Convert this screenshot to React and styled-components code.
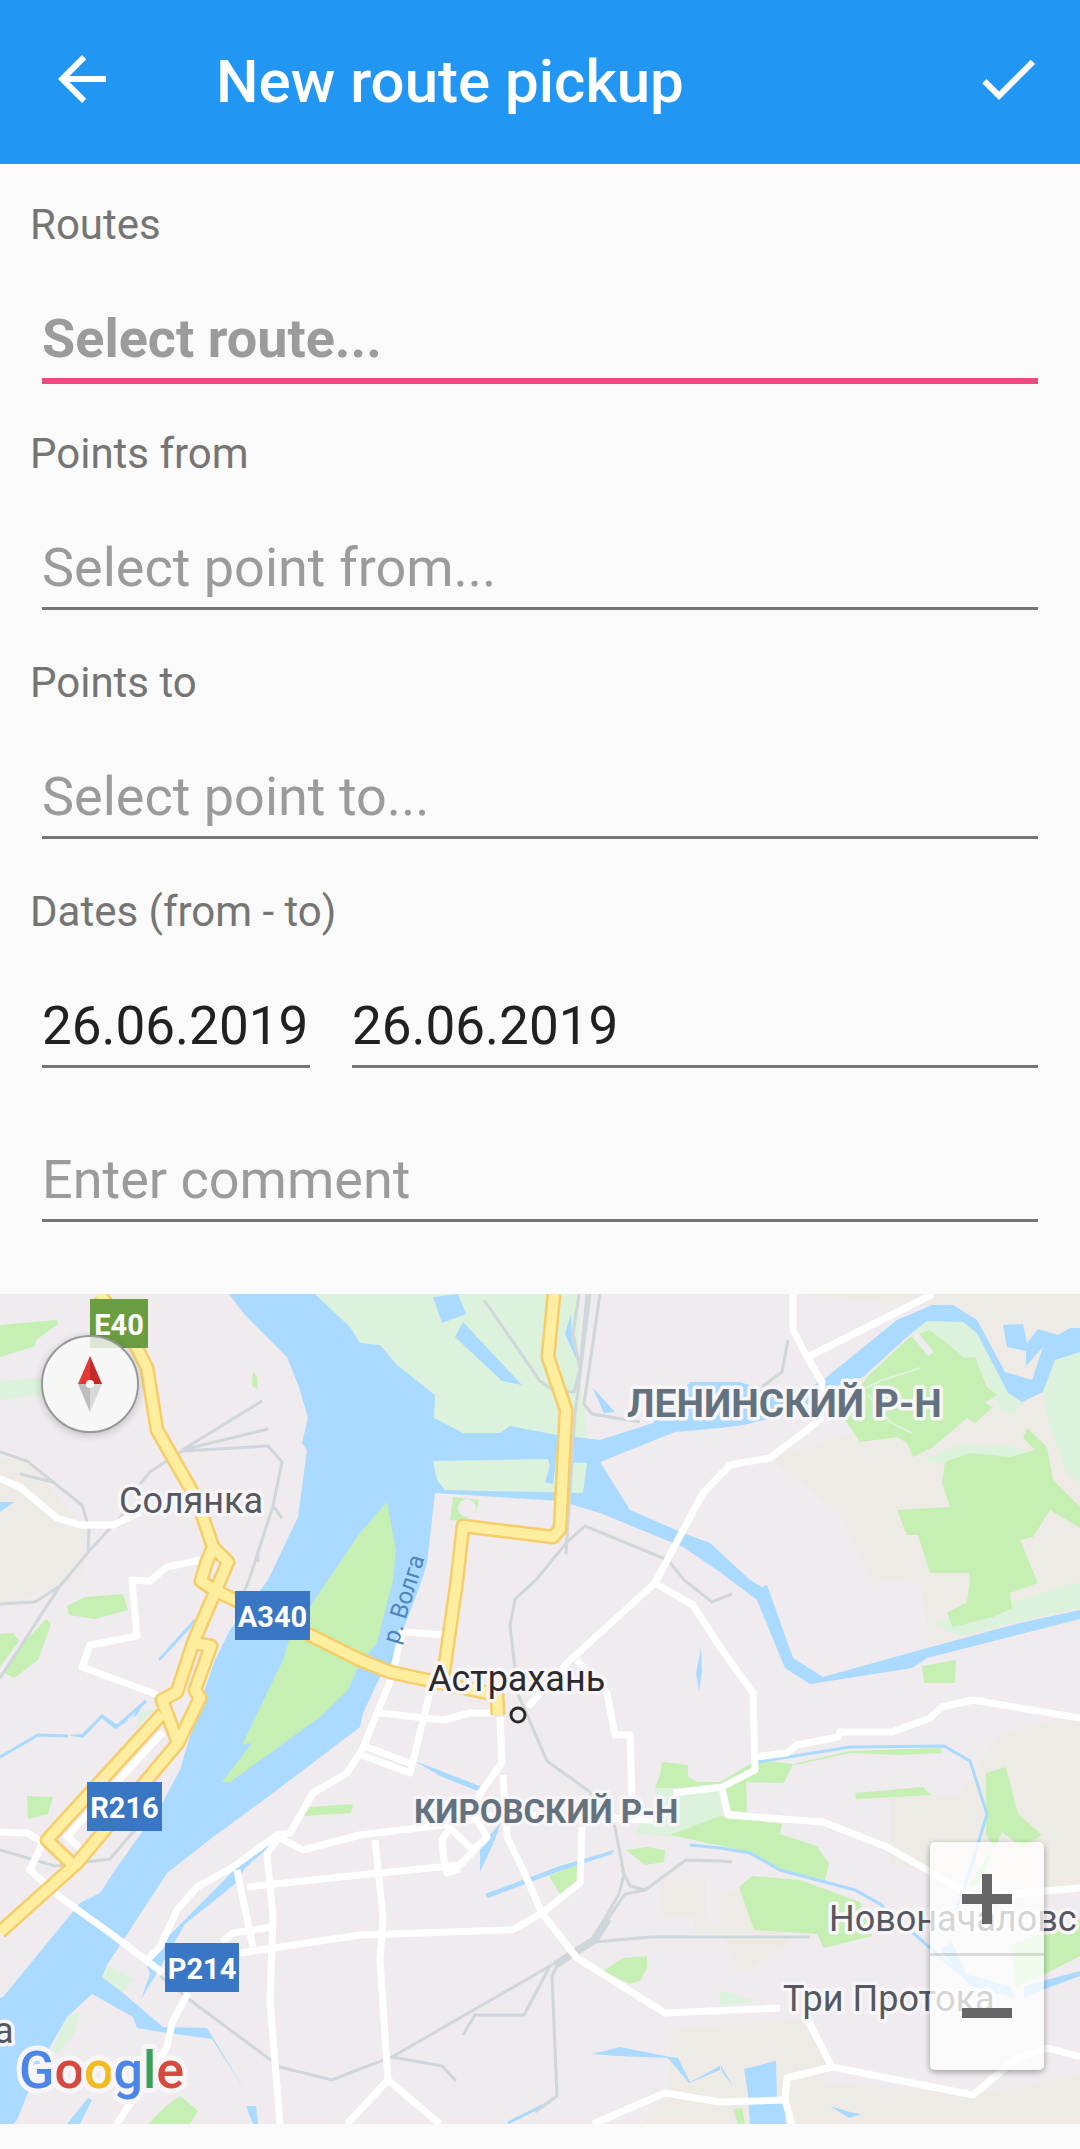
import { useState } from 'react';
import styled, { createGlobalStyle } from 'styled-components';
import { MdArrowBack, MdCheck } from 'react-icons/md';

const GlobalStyle = createGlobalStyle`
  *{
    box-sizing: border-box;
  }
  body{
    margin: 0;
    background: #fafafa;
    font-family: Roboto, sans-serif;
  }
`;

const Toolbar = styled.header`
  display: flex;
  align-items: flex-end;
  gap: 98px;
  padding: 43px 36px 49px 46px;
  color: #fff;
  background: #2196f3;
  h1{
    flex: 1;
    margin: 0;
    font-size: 60px;
    line-height: 66px;
    font-weight: 500;
  }
`;

const IconButton = styled.button`
  display: flex;
  padding: 0;
  border: 0;
  color: inherit;
  background: none;
  font-size: 72px;
`;

const Form = styled.form`
  display: flex;
  flex-direction: column;
  gap: 48px;
  padding: 36px 30px 72px;
`;

const Field = styled.div`
  display: flex;
  flex-direction: column;
  gap: 58px;
`;

const Label = styled.label`
  color: #757575;
  font-size: 42px;
  line-height: 49px;
`;

const line = `
  display: block;
  height: 74px;
  margin: 0 12px;
  padding: 0 0 8px;
  border: 0;
  border-bottom: 3px solid #757575;
  border-radius: 0;
  outline: 0;
  background: none;
  font-family: inherit;
  font-size: 54px;
  line-height: 63px;
`;

const Picker = styled.select`
  ${line}
  appearance: none;
  color: #9b9b9b;
  ${(p) => p.$active && `
    height: 77px;
    margin-bottom: -3px;
    border-bottom: 6px solid #ec4a81;
    font-weight: 700;
  `}
`;

const TextBox = styled.input`
  ${line}
  min-width: 0;
  color: #212121;
  &::placeholder{
    color: #9b9b9b;
    opacity: 1;
  }
`;

const Dates = styled.div`
  display: grid;
  grid-template-columns: 292px 1fr;
  gap: 18px;
  input{
    font-size: 53px;
  }
`;

const Comment = styled(TextBox)`
  margin-top: 32px;
`;

const MapBox = styled.section`
  position: relative;
  overflow: hidden;
  margin-bottom: 25px;
`;

const MapCanvas = styled.svg`
  display: block;
  width: 100%;
  height: 830px;
  font-family: Roboto, sans-serif;
`;

const Compass = styled.button`
  position: absolute;
  top: 41px;
  left: 41px;
  width: 98px;
  height: 98px;
  padding: 0;
  border: 2px solid #98979a;
  border-radius: 50%;
  background: rgba(250, 250, 250, 0.8);
  box-shadow: 0 2px 8px rgba(0, 0, 0, 0.2);
  svg{
    display: block;
    margin: auto;
  }
`;

const ZoomBox = styled.div`
  position: absolute;
  right: 36px;
  bottom: 54px;
  display: flex;
  flex-direction: column;
  width: 114px;
  border-radius: 5px;
  background: rgba(255, 255, 255, 0.75);
  box-shadow: 0 2px 6px rgba(0, 0, 0, 0.35);
`;

const ZoomButton = styled.button`
  display: flex;
  align-items: center;
  justify-content: center;
  height: 114px;
  padding: 0;
  border: 0;
  background: none;
  & + &{
    box-shadow: 0 -3px 0 rgba(0, 0, 0, 0.12);
  }
`;

const beige = [
  '770,164 850,140 1080,0 1080,330 930,350 920,290 870,285 840,220',
  '793,0 1080,0 1080,130 860,150 820,90 940,14',
  '890,500 960,500 1000,440 1080,420 1080,600 890,570',
  '0,163 27,167 60,205 85,240 84,280 40,300 0,310',
  '661,586 705,586 705,620 720,640 695,640 695,622 661,622',
  '672,735 800,725 830,770 790,830 640,830 668,800',
  '790,785 980,800 1080,780 1080,830 790,830',
  '720,600 770,590 790,650 740,680 720,640',
];

const lightGreen = [
  '315,0 580,0 578,73 588,146 434,146 434,100 360,52',
  '1080,58 1055,66 1043,98 1048,129 1067,179 1080,190',
  '0,87 60,82 70,98 0,106',
  '927,27 963,28 977,39 1008,99 1022,108 1014,122 1000,115 975,63 965,64 930,36 907,43',
  '923,165 960,150 1010,152 1030,158 1010,163 970,159 940,170',
  '107,671 133,685 123,699 102,683',
  '67,723 80,718 74,740 60,757 50,760',
  '140,418 158,415 145,424 135,436',
  '655,490 718,490 722,520 700,545 636,540 640,530 655,520',
  '950,350 975,345 940,362',
  '720,696 756,707 720,712',
  '933,330 1080,288 1080,314 1020,327 960,342',
];

const parks = [
  '0,31 57,26 58,30 36,46 35,52 0,63',
  '253,78 257,82 258,95 252,92',
  '910,43 930,36 965,64 975,63 987,93 997,101 985,109 993,113 975,129 967,124 933,153 913,163 907,149 897,143 860,148 843,123 867,83',
  '1027,134 1047,153 1053,186 1080,213 1080,234 1050,216 1033,243 1020,246 1038,289 1010,299 1012,314 993,323 953,333 947,319 967,308 970,286 969,279 930,279 918,241 907,241 897,216 950,213 942,189 945,168 970,159 1010,163 1035,156 1023,144',
  '67,312 85,303 123,300 128,316 95,325 69,321',
  '0,340 13,339 19,347 0,373',
  '46,325 51,330 38,366 14,384 5,379 20,353',
  '27,502 53,503 48,520 28,525',
  '310,513 353,510 351,519 303,522',
  '922,372 956,366 955,389 924,389',
  '720,488 757,466 793,470 784,489 746,488 747,518 728,516',
  '793,470 850,457 942,454 941,459 900,461 850,459 795,471',
  '855,499 923,493 931,501 856,505',
  '986,479 1006,473 1018,520 1042,541 1022,553 1002,538 994,556 986,540',
  '662,468 688,471 688,483 698,488 720,488 720,493 655,494 660,481',
  '670,541 720,522 782,530 780,540 817,552 829,570 825,586 780,576 740,556',
  '626,556 647,553 665,556 664,568 645,571',
  '549,582 577,570 578,586 560,600',
  '603,677 623,664 647,662 647,674 641,686 630,690',
  '739,593 752,582 800,586 860,608 872,642 824,654 817,640 754,636',
  '1011,651 1080,625 1080,662 1045,680 1016,693',
  '165,813 180,802 198,817 190,830 148,830',
  '733,815 742,814 745,830 738,830',
  '978,576 992,556 985,580 975,592 968,592',
];

const river = 'M229 0L245 21 287 63 299 93 308 124 302 149 307 156 298 223 268 286 230 336 215 366 200 409 180 476 160 513 115 576 100 599 80 609 3 703 0 704V830H13L17 826 27 801 50 753 67 723 92 700 133 723 137 734 167 739 212 745 245 796 207 734 163 733 123 699 102 683 107 671 167 579 213 543 277 496 360 433 363 419 380 383 395 369 403 336 422 286 427 269 435 199 560 207 600 219 683 253 720 278 757 306 785 374 810 390 912 374 927 364 1080 325V316L1020 329 920 356 823 383 793 364 767 291 762 293 750 286 710 249 683 239 630 216 600 168 675 138 720 134 743 131 790 120 830 96 863 83 907 43 927 27 963 28 977 39 1008 99 1022 108 1043 98 1055 66 1080 58V34H1070L1058 41 1038 35 1027 49 1023 30 1003 31 1007 53 1026 57V72L1043 53 1032 86 1005 78 977 26 953 11H932L897 26 823 86 790 105 740 88H690L653 129 600 146 557 141 510 132 500 139H463L434 124 435 101 397 71 380 51 360 49 350 33 315 0Z';

const ponds = [
  '433,3 458,0 466,20 442,29',
  '463,28 522,91 502,87 455,43',
  '571,20 565,40 574,60 578,68 572,45',
  '592,93 615,118 604,119',
  '0,208 14,208 0,218',
  '158,365 194,325 196,328 160,367',
  '701,354 696,380 699,397 702,378',
  '415,467 485,494 480,498 440,482',
  '480,553 501,528 494,548 480,578',
  '485,600 560,572 614,556 612,560 560,577 488,604',
  '145,666 240,570 275,544 277,546 245,574 235,590 185,630 160,674 141,705 150,680',
  '592,760 620,753 670,763 678,764 690,788 720,772 720,776 689,789 668,764 618,762',
  '744,775 776,767 777,805 784,808 786,830 750,830 748,800',
  '67,830 88,804 92,806 80,830',
  '246,812 256,812 258,830 253,830',
  '830,812 850,818 861,820 849,824',
  '720,770 733,792 722,778',
];

const streams = [
  'M0 463L38 441 68 442',
  'M115 434L146 407',
  'M758 468L850 453 944 452 970 467 987 520 970 576 955 620',
  'M690 551L720 554 750 559 780 576 855 596 880 610 920 645 960 680 1000 694',
  'M508 829L550 808',
];

const rails = [
  'M0 158L27 167 53 188 82 211 89 234 88 256',
  'M20 180L53 188',
  'M262 107L182 156 268 135',
  'M182 157L268 152 282 168 273 212 249 286 243 300',
  'M273 212L282 224',
  'M258 257L258 268',
  'M182 157L150 178 140 190',
  'M128 215L90 256 60 292 0 384',
  'M0 310L35 308 60 292',
  'M484 6L540 87 553 96 574 98 580 75 587 0',
  'M579 0L573 40 580 75',
  'M600 0L584 110 592 120 640 128',
  'M590 0L575 120 566 260',
  'M536 286L567 248 585 232 668 266 684 286 712 308 732 300',
  'M536 286L515 305 510 332 518 400 547 467 590 498 615 533 624 580 619 600 590 650',
  'M622 576L630 592 645 596 686 566 720 567 732 568',
  'M645 596L625 600 595 644 550 672 392 763 360 775 332 786 280 773 190 706 160 682',
  'M392 763L442 772 456 787',
  'M550 672L524 721H475L463 741',
  'M558 670L552 682 557 802 535 818',
  'M595 648L650 643 810 643',
  'M0 556L55 572 110 565 140 530',
  'M788 46L782 78 762 93',
];

const roads = [
  'M-2 184L20 193 57 224 80 231 113 231 140 218',
  'M200 266L167 273 150 287 132 286 137 342 90 351 82 373 158 401',
  'M163 438L67 543 80 554',
  'M0 538L27 539 43 548 30 576 60 603 110 639 163 679',
  'M447 341L402 338 392 383 362 456 347 479 313 499 290 539 277 541 233 573 197 593 177 616 160 653 147 666',
  'M280 544L303 556 360 541 443 531 500 520 653 526',
  'M673 499L722 493 755 476 753 399 720 353 693 311 655 289 567 369 528 413',
  'M655 289L703 199 730 171 770 164 820 126 822 88 807 63 793 36V0',
  'M808 63L933 0',
  'M755 463L787 459 797 451 838 443 840 438H892L930 424 942 413 973 406 1080 424',
  'M722 494L728 521 823 528 887 553 927 576 973 603 1080 594',
  'M577 366L607 399 615 441H630L632 505',
  'M432 390L410 479 362 461',
  'M367 453L409 469',
  'M380 419L443 426 470 419H493',
  'M500 423L502 469 480 499 473 519 487 543 473 556 450 534 442 546 443 560 447 579 460 575',
  'M503 481L507 543 523 576 542 619 577 664 665 719 780 714',
  'M808 726L832 773 973 801 1017 764 1048 754 1080 763',
  'M832 773L787 784 785 806 792 830',
  'M593 830L665 799 720 808 785 806',
  'M247 593L360 581 460 571 487 543',
  'M237 576L253 653',
  'M280 542L267 560 273 623 270 706 280 830',
  'M222 648L233 639 272 633',
  'M240 659L360 641 512 636 542 619 580 589 582 533',
  'M375 546L383 623 380 666 388 786 347 830',
  'M388 786L440 830',
  'M188 699L172 729 167 753 117 830',
];

const highways = [
  'M100 0L137 54 147 74 157 136 197 206 213 253 228 268 216 296 193 349 177 398 162 406 178 449',
  'M213 253L206 270 201 287 214 296 235 306 310 341 360 366 390 378 427 386 497 401 498 421',
  'M193 349L211 352 195 396 200 404 178 449 77 569 0 638',
  'M162 420L47 546 75 573',
  'M554 0L548 63 566 116 560 235 553 243 463 232 457 286 443 384',
];

const shields = [
  { text: 'E40', x: 90, y: 5, w: 58, fill: '#6b9d42' },
  { text: 'A340', x: 235, y: 297, w: 75, fill: '#3977c5' },
  { text: 'R216', x: 87, y: 488, w: 75, fill: '#3977c5' },
  { text: 'P214', x: 165, y: 649, w: 74, fill: '#3977c5' },
];

const places = [
  { text: 'Солянка', x: 119, y: 219, size: 36, fill: '#55585f' },
  { text: 'ЛЕНИНСКИЙ Р-Н', x: 627, y: 123, size: 39, weight: 700, fill: '#64727f' },
  { text: 'КИРОВСКИЙ Р-Н', x: 414, y: 529, size: 33, weight: 700, fill: '#64727f' },
  { text: 'Астрахань', x: 428, y: 397, size: 36, fill: '#2b2b2e' },
  { text: 'Новоначаловс', x: 829, y: 637, size: 36, fill: '#55585f' },
  { text: 'Три Протока', x: 783, y: 717, size: 36, fill: '#55585f' },
  { text: 'а', x: -6, y: 749, size: 36, fill: '#55585f' },
];

function CityMap() {
  return (
    <MapCanvas viewBox="0 0 1080 830" preserveAspectRatio="xMidYMid slice" role="img" aria-label="Астрахань">
      <rect width="1080" height="830" fill="#efebee" />
      <g fill="#eeebe6">{beige.map((p) => <polygon key={p} points={p} />)}</g>
      <g fill="#dcf2dc">{lightGreen.map((p) => <polygon key={p} points={p} />)}</g>
      <g fill="#c5efb3">{parks.map((p) => <polygon key={p} points={p} />)}</g>
      <path d={river} fill="#aadaff" />
      <polygon points="433,167 548,165 550,172 545,188 553,190 556,168 587,169 583,199 445,196 437,186" fill="#dcf2dc" />
      <path d="M387 208L396 256 393 286 377 349 360 369 348 396 320 423 230 488H222L252 449 242 451 283 366 290 343 328 286 360 239Z" fill="#c5efb3" />
      <path d="M453 203L479 206 476 218 463 227 450 226Z" fill="#c5efb3" />
      <circle cx="467" cy="214" r="9" fill="#efebee" />
      <g fill="none" stroke="#efebee">
        <path d="M913 38L931 60" strokeWidth="7" />
        <path d="M866 94L880 87 920 74M868 101L890 128 912 139" stroke="#dcf2dc" strokeWidth="2" />
      </g>
      <g fill="#aadaff">{ponds.map((p) => <polygon key={p} points={p} />)}</g>
      <g fill="none" stroke="#aadaff" strokeWidth="3">{streams.map((d) => <path key={d} d={d} />)}</g>
      <path d="M68 441L83 444 102 424 115 435 137 421 146 405 138 413 132 425 116 430 102 420 82 440Z" fill="#aadaff" />
      <path d="M940 655L952 648 966 680 1010 692 1015 704 970 692Z" fill="#aadaff" />
      <path d="M1024 692L1080 677V682L1050 693 1024 703Z" fill="#aadaff" />
      <g fill="none" stroke="#d0d7da" strokeWidth="3">{rails.map((d) => <path key={d} d={d} />)}</g>
      <path d="M555 671L594 646 608 625" fill="none" stroke="#d0d7da" strokeWidth="8" />
      <g fill="none" stroke="#fff" strokeWidth="7" strokeLinejoin="round">
        {roads.map((d) => <path key={d} d={d} />)}
      </g>
      <g fill="none" stroke="#f6cd69" strokeWidth="15" strokeLinejoin="round">
        {highways.map((d) => <path key={d} d={d} />)}
      </g>
      <g fill="none" stroke="#ffeea0" strokeWidth="10" strokeLinejoin="round">
        {highways.map((d) => <path key={d} d={d} />)}
      </g>
      {shields.map((s) => (
        <g key={s.text}>
          <rect x={s.x} y={s.y} width={s.w} height="49" fill={s.fill} />
          <text x={s.x + s.w / 2} y={s.y + 36} fill="#fff" fontSize="29" fontWeight="700" textAnchor="middle">{s.text}</text>
        </g>
      ))}
      <g stroke="#f7f5f7" strokeWidth="7" strokeLinejoin="round" paintOrder="stroke">
        {places.map((p) => (
          <text key={p.text} x={p.x} y={p.y} fontSize={p.size} fontWeight={p.weight} fill={p.fill}>{p.text}</text>
        ))}
      </g>
      <text x="398" y="351" fontSize="24" fill="#4f84bc" transform="rotate(-73 398 351)">р. Волга</text>
      <circle cx="518" cy="421" r="7" fill="#eee" stroke="#2b2b2e" strokeWidth="3" />
      <text x="19" y="794" fontFamily="Roboto, sans-serif" fontSize="52" fontWeight="500" stroke="#f7f5f7" strokeWidth="10" strokeLinejoin="round" paintOrder="stroke">
        <tspan fill="#4b86e8">G</tspan>
        <tspan fill="#d6493e">o</tspan>
        <tspan fill="#f2bb1d">o</tspan>
        <tspan fill="#4b86e8">g</tspan>
        <tspan fill="#38a156">l</tspan>
        <tspan fill="#d6493e">e</tspan>
      </text>
    </MapCanvas>
  );
}

function App() {
  const [from, setFrom] = useState('26.06.2019');
  const [to, setTo] = useState('26.06.2019');

  return (
    <>
      <GlobalStyle />
      <Toolbar>
        <IconButton type="button" aria-label="Back"><MdArrowBack /></IconButton>
        <h1>New route pickup</h1>
        <IconButton type="submit" form="pickup" aria-label="Save"><MdCheck /></IconButton>
      </Toolbar>
      <Form id="pickup" onSubmit={(e) => e.preventDefault()}>
        <Field>
          <Label htmlFor="route">Routes</Label>
          <Picker id="route" $active><option>Select route...</option></Picker>
        </Field>
        <Field>
          <Label htmlFor="point-from">Points from</Label>
          <Picker id="point-from"><option>Select point from...</option></Picker>
        </Field>
        <Field>
          <Label htmlFor="point-to">Points to</Label>
          <Picker id="point-to"><option>Select point to...</option></Picker>
        </Field>
        <Field>
          <Label htmlFor="date-from">Dates (from - to)</Label>
          <Dates>
            <TextBox id="date-from" value={from} onChange={(e) => setFrom(e.target.value)} />
            <TextBox aria-label="Date to" value={to} onChange={(e) => setTo(e.target.value)} />
          </Dates>
        </Field>
        <Comment aria-label="Comment" placeholder="Enter comment" />
      </Form>
      <MapBox>
        <CityMap />
        <Compass type="button" aria-label="Compass">
          <svg width="24" height="56" viewBox="0 0 24 56">
            <path d="M12 0L0 28H12Z" fill="#e53935" />
            <path d="M12 0L24 28H12Z" fill="#c62828" />
            <path d="M0 28H12V56Z" fill="#bdbdbd" />
            <path d="M24 28H12V56Z" fill="#d9d9d9" />
            <circle cx="12" cy="28" r="4" fill="#fff" />
          </svg>
        </Compass>
        <ZoomBox>
          <ZoomButton type="button" aria-label="Zoom in">
            <svg width="50" height="50"><path d="M20 0H30V20H50V30H30V50H20V30H0V20H20Z" fill="#666" /></svg>
          </ZoomButton>
          <ZoomButton type="button" aria-label="Zoom out">
            <svg width="50" height="10"><path d="M0 0H50V10H0Z" fill="#666" /></svg>
          </ZoomButton>
        </ZoomBox>
      </MapBox>
    </>
  );
}

export default App;
